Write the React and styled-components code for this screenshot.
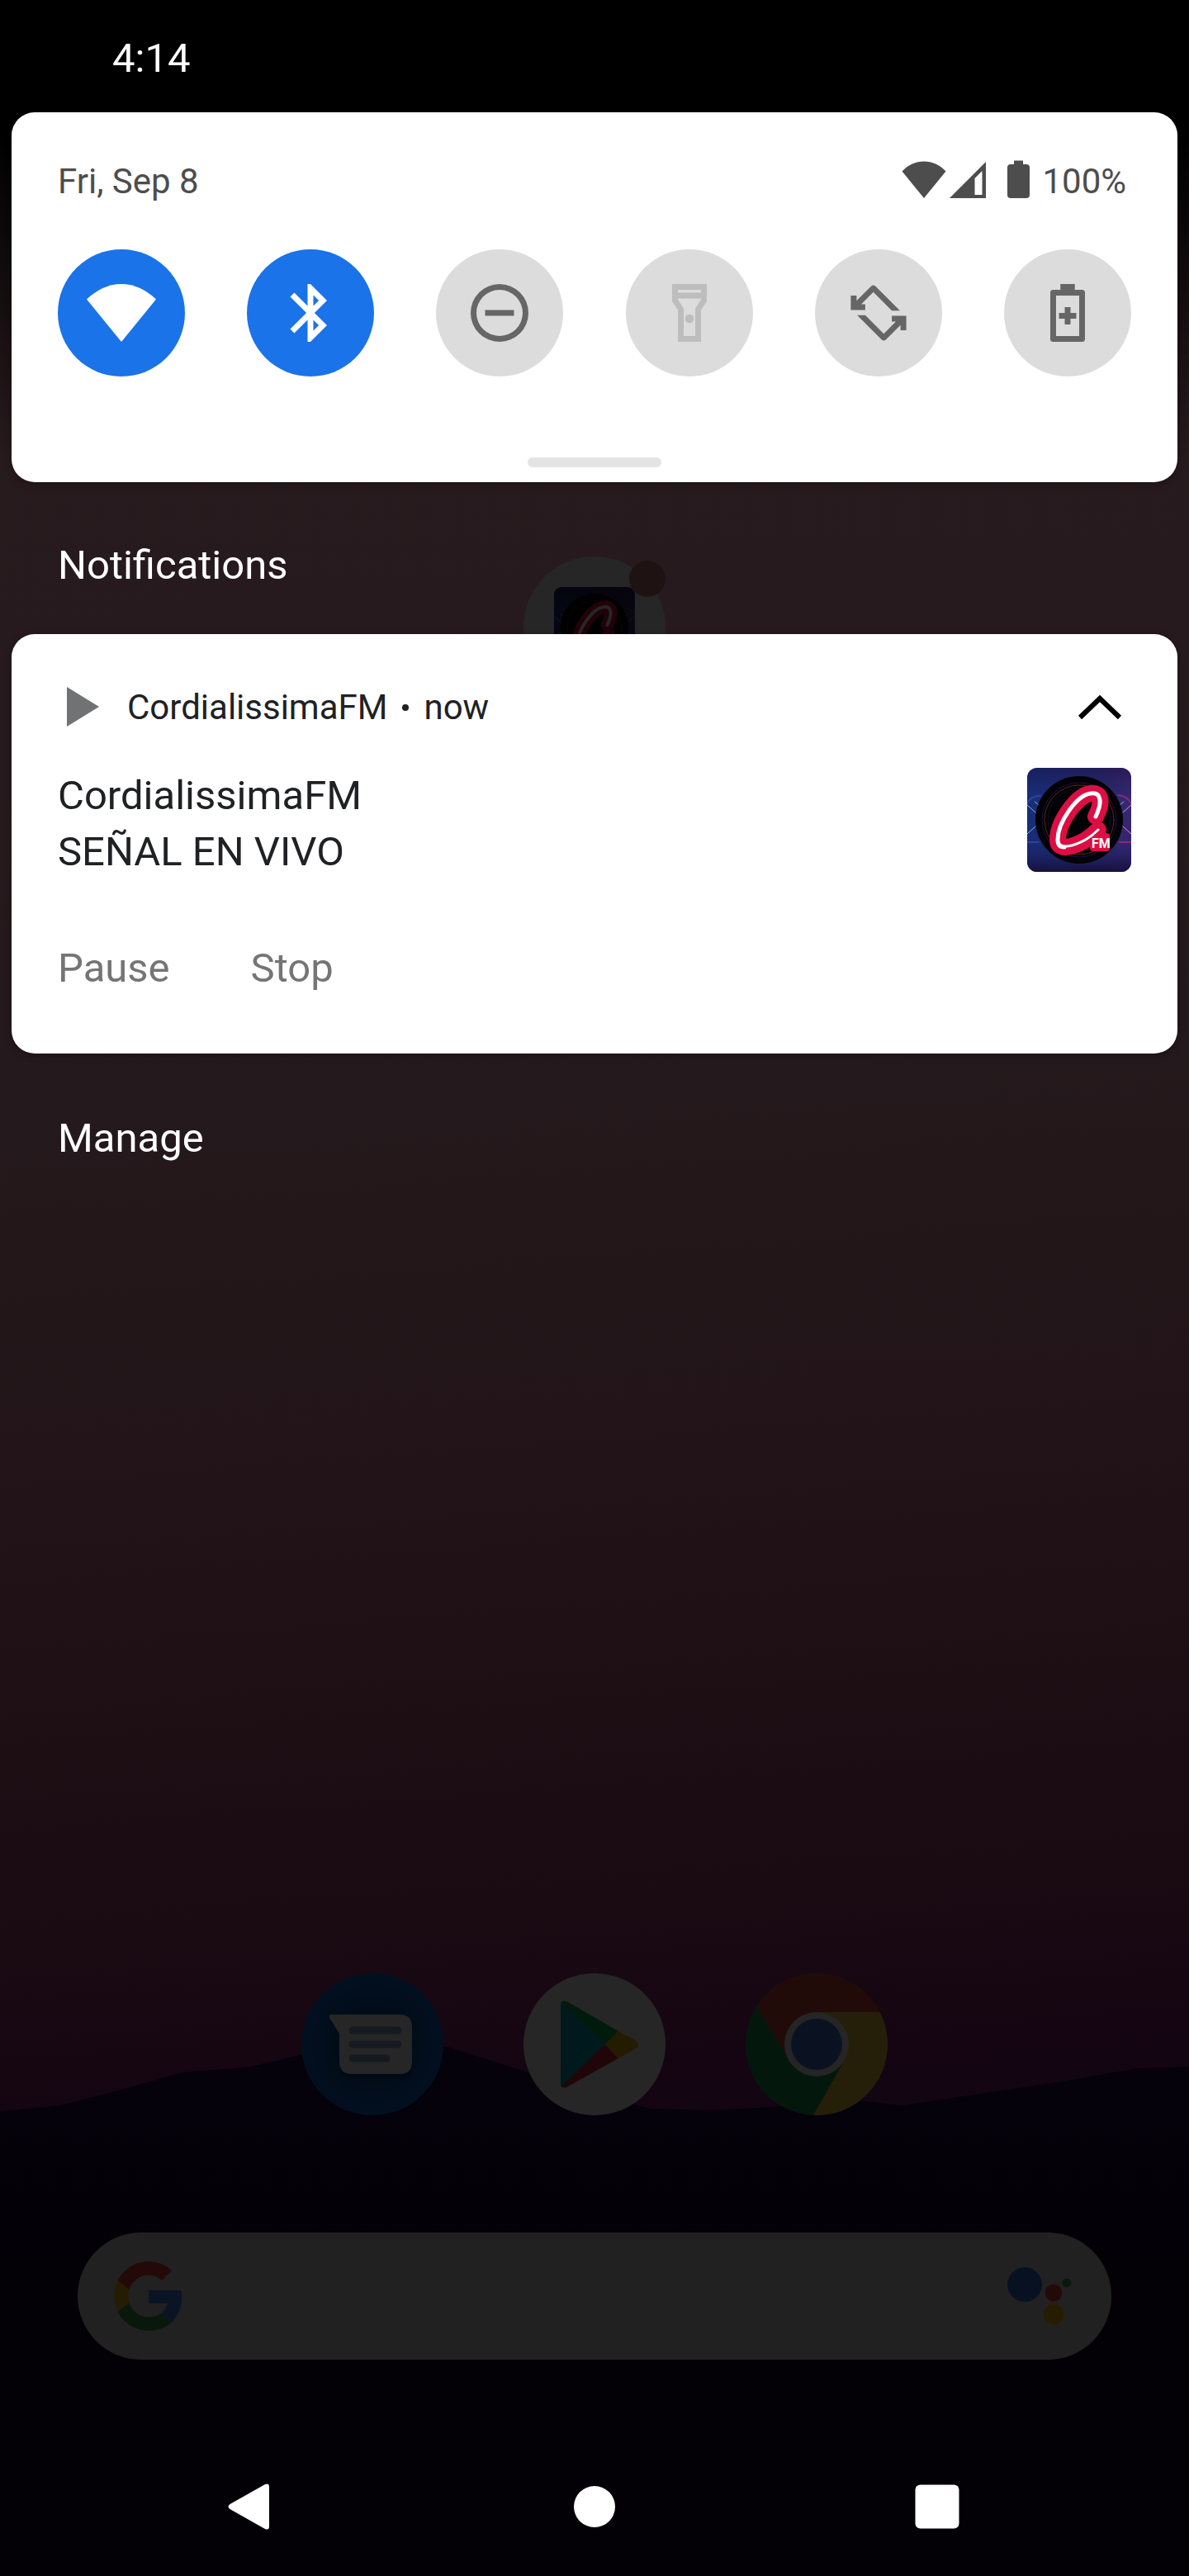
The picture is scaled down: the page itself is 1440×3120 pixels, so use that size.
import React from "react";
import styled, { createGlobalStyle } from "styled-components";

const GlobalStyle = createGlobalStyle`
  *, *::before, *::after { box-sizing: border-box; }
  body { margin: 0; background: #000; font-family: Roboto, "Noto Sans", sans-serif; }
  button { font: inherit; color: inherit; background: none; border: 0; padding: 0; cursor: pointer; }
  svg { display: block; flex: none; }
  h1, h2, p { margin: 0; font-weight: 400; }
`;

const Screen = styled.main`
  position: relative;
  isolation: isolate;
  display: flex;
  flex-direction: column;
  min-height: 100vh;
  overflow: hidden;
  font-size: 49px;
  line-height: 58px;
  color: #fff;
`;

const Wallpaper = styled.svg`
  position: absolute;
  inset: 0;
  z-index: -2;
  width: 100%;
  height: 100%;
`;

const StatusBar = styled.header`
  height: 136px;
  padding: 42px 136px 0;
`;

const Card = styled.section`
  margin: 0 14px;
  padding: ${(p) => p.$pad};
  border-radius: 28px;
  background: #fff;
  color: #202124;
  box-shadow: 0 2px 10px rgba(0, 0, 0, 0.3);
`;

const SettingsHeader = styled.div`
  display: flex;
  align-items: center;
  height: 52px;
  padding-right: 6px;
  font-size: 42px;
  line-height: 52px;
  color: #4d4d4d;
`;

const StatusIcons = styled.div`
  display: flex;
  align-items: center;
  margin-left: auto;
`;

const BatteryLevel = styled.span`
  margin-left: 14px;
`;

const Tiles = styled.div`
  display: flex;
  justify-content: space-between;
  margin-top: 56px;
`;

const Tile = styled.button`
  display: grid;
  place-items: center;
  width: 154px;
  height: 154px;
  border-radius: 50%;
  background: ${(p) => (p.$on ? "#1a73e8" : "#dcdcdc")};
  color: ${(p) => (p.$on ? "#fff" : p.disabled ? "#bdbdbd" : "#666")};
`;

const Handle = styled.div`
  width: 162px;
  height: 12px;
  margin: 98px auto 0;
  border-radius: 6px;
  background: #e4e4e4;
`;

const SectionHeading = styled.div`
  position: relative;
  padding: 72px 70px 54px;
`;

const SectionTitle = styled.h2`
  font-size: 49px;
`;

const HomeApp = styled.div`
  position: absolute;
  z-index: -1;
  top: 90px;
  left: 50%;
  display: grid;
  place-items: center;
  width: 172px;
  height: 172px;
  margin-left: -86px;
  border-radius: 50%;
  background: #fff;
  filter: brightness(0.15);
`;

const Badge = styled.span`
  position: absolute;
  top: 5px;
  right: 0;
  width: 44px;
  height: 44px;
  border-radius: 50%;
  background: #c87a80;
`;

const NotificationHeader = styled.div`
  display: flex;
  align-items: center;
  height: 58px;
  font-size: 42px;
`;

const AppName = styled.span`
  margin-left: 28px;
`;

const Dot = styled.span`
  width: 8px;
  height: 8px;
  margin: 0 18px;
  border-radius: 50%;
  background: #202124;
`;

const Collapse = styled.button`
  margin: 0 8px 0 auto;
`;

const NotificationBody = styled.div`
  display: flex;
  justify-content: space-between;
  margin-top: 44px;
  line-height: 68px;
`;

const Actions = styled.div`
  display: flex;
  gap: 98px;
  margin-top: 78px;
  color: #757575;
`;

const ManageRow = styled.div`
  padding: 74px 70px;
`;

const Dock = styled.nav`
  display: flex;
  justify-content: center;
  gap: 97px;
  margin-top: auto;
`;

const DockApp = styled.a`
  display: block;
  border-radius: 50%;
  filter: brightness(0.15);
`;

const SearchBar = styled.form`
  display: flex;
  align-items: center;
  height: 154px;
  margin: 142px 94px 94px;
  padding: 0 44px;
  border-radius: 77px;
  background: #dedede;
  filter: brightness(0.15);
`;

const SearchInput = styled.input`
  flex: 1;
  min-width: 0;
  height: 100%;
  border: 0;
  outline: 0;
  background: transparent;
  font: inherit;
`;

const NavBar = styled.nav`
  display: flex;
  justify-content: center;
  gap: 275px;
  height: 168px;
`;

const NavButton = styled.button`
  display: grid;
  place-items: center;
  width: 140px;
`;

const tiles = [
  { label: "Wi-Fi", on: true, art: <path d="M12 22 24 7.3C20.7 4.1 16.5 2 12 2S3.3 4.1 0 7.3Z" /> },
  {
    label: "Bluetooth",
    on: true,
    art: (
      <path d="M17.71 7.71 12 2h-1v7.59L6.41 5 5 6.41 10.59 12 5 17.59 6.41 19 11 14.41V22h1l5.71-5.71L13.41 12zM13 5.83l1.88 1.88L13 9.59zm1.88 10.46L13 18.17v-3.76z" />
    ),
  },
  {
    label: "Do not disturb",
    art: <path d="M7 11v2h10v-2zM12 2a10 10 0 1 0 0 20 10 10 0 0 0 0-20zm0 18a8 8 0 1 1 0-16 8 8 0 0 1 0 16z" />,
  },
  {
    label: "Flashlight",
    disabled: true,
    art: (
      <>
        <path d="M6 2v6l2 3v11h8V11l2-3V2zm10 2v1H8V4zm-2 6.4V20h-4v-9.6l-2-3V7h8v.4z" />
        <circle cx="12" cy="14" r="1.5" />
      </>
    ),
  },
  {
    label: "Auto-rotate",
    art: (
      <>
        <path d="M2.4 6h2v1.8l5.1-5.1q.7-.6 1.4 0l8.5 8.5h-2.8l-6.4-6.4L6 9h1.4v2h-5z" />
        <path transform="rotate(180 12 12)" d="M2.4 6h2v1.8l5.1-5.1q.7-.6 1.4 0l8.5 8.5h-2.8l-6.4-6.4L6 9h1.4v2h-5z" />
      </>
    ),
  },
  {
    label: "Battery Saver",
    art: (
      <>
        <path fillRule="evenodd" d="M9.5 2h5v2H17a1 1 0 0 1 1 1v16a1 1 0 0 1-1 1H7a1 1 0 0 1-1-1V5a1 1 0 0 1 1-1h2.5zM8 6v14h8V6z" />
        <path d="M11 10h2v2h2v2h-2v2h-2v-2H9v-2h2z" />
      </>
    ),
  },
];

function CoverArt({ size, id }) {
  return (
    <svg width={size} height={size} viewBox="0 0 126 126" aria-hidden="true">
      <defs>
        <linearGradient id={`${id}-sky`} x2="1" y2="0.2">
          <stop offset="0" stopColor="#16276b" />
          <stop offset="0.6" stopColor="#23205f" />
          <stop offset="1" stopColor="#451c5c" />
        </linearGradient>
        <linearGradient id={`${id}-shade`} x2="0" y2="1">
          <stop offset="0" stopColor="#1a1750" stopOpacity="0.5" />
          <stop offset="0.3" stopColor="#1c3b90" stopOpacity="0.4" />
          <stop offset="0.7" stopColor="#1b3588" stopOpacity="0.4" />
          <stop offset="1" stopColor="#170f3c" />
        </linearGradient>
        <clipPath id={`${id}-clip`}>
          <rect width="126" height="126" rx="12" />
        </clipPath>
      </defs>
      <g clipPath={`url(#${id}-clip)`} fill="none" strokeLinecap="round">
        <rect width="126" height="126" fill={`url(#${id}-sky)`} />
        <rect width="126" height="126" fill={`url(#${id}-shade)`} />
        <path d="M0 45 10 54M0 80 10 71M9 41l5 4" stroke="#72bce8" />
        <path d="M0 43Q4 34 16 34M0 90h14" stroke="#3c55b8" strokeWidth="2" opacity="0.6" />
        <path d="M126 45 116 54M126 80 116 71M117 41l-5 4" stroke="#e08ad8" />
        <path d="M126 43Q121 34 110 33M126 90h-14" stroke="#a5307c" strokeWidth="2" opacity="0.7" />
        <circle cx="63" cy="63" r="53" fill="#020105" />
        <circle cx="63" cy="63" r="45" stroke="#26145c" strokeWidth="0.8" />
        <circle cx="63" cy="63" r="42" stroke="#70380a" strokeWidth="0.8" />
        <circle cx="63" cy="63" r="38" stroke="#17103a" strokeWidth="0.8" />
        <path
          d="M83 59C92 42 90 29 77 31C60 33 37 66 37 87C37 105 68 93 86 75"
          stroke="#dd0e43"
          strokeWidth="20"
          strokeLinejoin="round"
        />
        <rect x="76" y="79" width="24" height="22" rx="4" fill="#dd0e43" />
        <path d="M84 58C92 42 90 29 77 31C60 33 37 66 37 87C37 103 68 93 86 75" stroke="#fff" strokeWidth="3" />
        <path d="M83 59C91 42 90 29 77 31C60 33 37 66 37 87Q37 96 45 96" stroke="#fff" strokeWidth="5" />
        <text x="78" y="97" fill="#fff" fontFamily="'Liberation Sans Narrow', Roboto, sans-serif" fontWeight="700" fontSize="16">
          FM
        </text>
      </g>
    </svg>
  );
}

function MessagesIcon() {
  return (
    <svg width="172" height="172" viewBox="0 0 172 172" role="img" aria-label="Messages">
      <defs>
        <radialGradient id="msg">
          <stop offset="0.5" stopColor="#0a50a0" />
          <stop offset="1" stopColor="#0f68d6" />
        </radialGradient>
      </defs>
      <circle cx="86" cy="86" r="86" fill="url(#msg)" />
      <path d="M38 55H120q14 0 14 14v46q0 14-14 14H60q-14 0-14-14V76L34 56z" fill="#063a78" opacity="0.5" />
      <path d="M36 50H119q15 0 15 15v42q0 15-15 15H61q-15 0-15-15V73L34 54q-1-4 2-4z" fill="#fff" />
      <path d="M62 69h55M62 86h55M62 103h41" stroke="#8db0dc" strokeWidth="9" strokeLinecap="round" />
    </svg>
  );
}

function PlayStoreIcon() {
  return (
    <svg width="172" height="172" viewBox="0 0 172 172" role="img" aria-label="Play Store">
      <circle cx="86" cy="86" r="86" fill="#fff" />
      <path d="M45 38v97q0 3 3 3L99 86 48 34q-3 0-3 4z" fill="#00a5c4" />
      <path d="M46 35q3-3 8 0l61 35-16 16z" fill="#00b04a" />
      <path d="M46 137q3 3 8 0l61-34-16-17z" fill="#d6283a" />
      <path d="m115 70 22 12q5 5 0 9l-22 12-16-17z" fill="#f0b800" />
    </svg>
  );
}

function ChromeIcon() {
  return (
    <svg width="172" height="172" viewBox="0 0 172 172" role="img" aria-label="Chrome">
      <defs>
        <clipPath id="chrome-disc">
          <circle cx="86" cy="86" r="86" />
        </clipPath>
      </defs>
      <g clipPath="url(#chrome-disc)">
        <rect width="172" height="172" fill="#1a9b52" />
        <path d="M86 47H172V172H82L120 105z" fill="#f7cf42" />
        <path d="M14 41 0 0H172V47H86L48 98z" fill="#df4b34" />
      </g>
      <circle cx="86" cy="86" r="39" fill="#f4f4f4" />
      <circle cx="86" cy="86" r="31" fill="#4478e2" />
    </svg>
  );
}

export default function App() {
  return (
    <Screen>
      <GlobalStyle />
      <Wallpaper viewBox="0 0 1440 3120" preserveAspectRatio="none" aria-hidden="true">
        <defs>
          <linearGradient id="sky" gradientUnits="userSpaceOnUse" x1="600" y1="0" x2="840" y2="3120">
            <stop offset="0" stopColor="#281b1e" />
            <stop offset="0.25" stopColor="#271a1e" />
            <stop offset="0.42" stopColor="#24191c" />
            <stop offset="0.55" stopColor="#221418" />
            <stop offset="0.65" stopColor="#1d0f14" />
            <stop offset="0.74" stopColor="#1a0a12" />
            <stop offset="0.8" stopColor="#150512" />
            <stop offset="0.84" stopColor="#120413" />
          </linearGradient>
          <linearGradient id="scrim" x2="0" y2="1">
            <stop offset="0" stopColor="#000" />
            <stop offset="0.28" stopColor="#000" />
            <stop offset="1" stopColor="#000" stopOpacity="0" />
          </linearGradient>
          <linearGradient id="hills" x2="0" y2="1">
            <stop offset="0" stopColor="#05020c" />
            <stop offset="0.4" stopColor="#030106" />
            <stop offset="1" stopColor="#040106" />
          </linearGradient>
        </defs>
        <rect width="1440" height="3120" fill="url(#sky)" />
        <path
          d="M0 2557 73 2550 150 2530 220 2510 303 2503 349 2492 440 2474 542 2479 634 2508 716 2537 790 2554 863 2556 964 2550 1040 2544 1093 2550 1139 2543 1286 2521 1377 2505 1440 2503V3120H0Z"
          fill="url(#hills)"
        />
        <rect width="1440" height="560" fill="url(#scrim)" />
      </Wallpaper>

      <StatusBar>
        <time>4:14</time>
      </StatusBar>

      <Card $pad="58px 56px 18px" aria-label="Quick settings">
        <SettingsHeader>
          <span>Fri, Sep 8</span>
          <StatusIcons>
            <svg width="156" height="52" viewBox="0 0 156 52" fill="#4d4d4d" aria-hidden="true">
              <path d="M27 46 53.500 13.500C46 5.500 37 1.500 27 1.500S8 5.500.5 13.500Z" />
              <path fillRule="evenodd" d="M58 46 102 2V46ZM88.500 42H97.500V13L88.500 22Z" />
              <path d="M136 .5h11V5h4q4 0 4 4v33q0 4-4 4h-19q-4 0-4-4V9q0-4 4-4h4z" />
            </svg>
            <BatteryLevel>100%</BatteryLevel>
          </StatusIcons>
        </SettingsHeader>
        <Tiles>
          {tiles.map((t) => (
            <Tile key={t.label} $on={t.on} disabled={t.disabled} aria-label={t.label} aria-pressed={!!t.on}>
              <svg width="84" height="84" viewBox="0 0 24 24" fill="currentColor" aria-hidden="true">
                {t.art}
              </svg>
            </Tile>
          ))}
        </Tiles>
        <Handle />
      </Card>

      <SectionHeading>
        <HomeApp>
          <CoverArt size={98} id="home" />
          <Badge />
        </HomeApp>
        <SectionTitle>Notifications</SectionTitle>
      </SectionHeading>

      <Card as="article" $pad="60px 56px 74px">
        <NotificationHeader>
          <svg width="56" height="56" viewBox="0 0 56 56" aria-hidden="true">
            <path d="M11 3 50 27 11 51Z" fill="#707274" />
          </svg>
          <AppName>CordialissimaFM</AppName>
          <Dot />
          <time>now</time>
          <Collapse aria-label="Collapse">
            <svg width="60" height="56" viewBox="0 0 60 56" aria-hidden="true">
              <path d="M6 40 30 17 54 40" fill="none" stroke="#000" strokeWidth="6" />
            </svg>
          </Collapse>
        </NotificationHeader>
        <NotificationBody>
          <div>
            <p>CordialissimaFM</p>
            <p>SEÑAL EN VIVO</p>
          </div>
          <CoverArt size={126} id="cover" />
        </NotificationBody>
        <Actions>
          <button type="button">Pause</button>
          <button type="button">Stop</button>
        </Actions>
      </Card>

      <ManageRow>
        <button type="button">Manage</button>
      </ManageRow>

      <Dock aria-label="Favorites">
        <DockApp href="#messages">
          <MessagesIcon />
        </DockApp>
        <DockApp href="#play">
          <PlayStoreIcon />
        </DockApp>
        <DockApp href="#chrome">
          <ChromeIcon />
        </DockApp>
      </Dock>

      <SearchBar role="search">
        <svg width="84" height="84" viewBox="0 0 48 48" aria-hidden="true">
          <path fill="#EA4335" d="M24 9.500c3.540 0 6.710 1.220 9.210 3.600l6.850-6.850C35.900 2.380 30.470 0 24 0 14.620 0 6.510 5.380 2.560 13.220l7.980 6.190C12.430 13.720 17.740 9.500 24 9.500z" />
          <path fill="#4285F4" d="M46.980 24.550c0-1.570-.15-3.090-.38-4.550H24v9.020h12.940c-.58 2.960-2.260 5.480-4.780 7.180l7.730 6c4.510-4.180 7.090-10.360 7.090-17.650z" />
          <path fill="#FBBC05" d="M10.530 28.590c-.48-1.450-.76-2.990-.76-4.590s.27-3.140.76-4.590l-7.980-6.190C.92 16.460 0 20.120 0 24s.92 7.540 2.560 10.780z" />
          <path fill="#34A853" d="M24 48c6.480 0 11.930-2.130 15.890-5.810l-7.730-6c-2.150 1.450-4.920 2.300-8.160 2.300-6.260 0-11.570-4.220-13.470-9.910l-7.980 6.190C6.510 42.620 14.620 48 24 48z" />
        </svg>
        <SearchInput type="search" aria-label="Search" />
        <button type="button" aria-label="Assistant">
          <svg width="84" height="84" viewBox="0 0 84 84" aria-hidden="true">
            <circle cx="23" cy="28" r="21" fill="#3574dc" />
            <circle cx="58" cy="38" r="10.500" fill="#ea4335" />
            <circle cx="74" cy="26" r="5.500" fill="#34a853" />
            <circle cx="58" cy="64" r="12.500" fill="#fbbc05" />
          </svg>
        </button>
      </SearchBar>

      <NavBar aria-label="System">
        <NavButton aria-label="Back">
          <svg width="60" height="60" viewBox="0 0 60 60" fill="#fff" aria-hidden="true">
            <path d="M3.500 27 46 3q5-2 5 3v48q0 5-5 3L3.500 33q-4-3 0-6z" />
          </svg>
        </NavButton>
        <NavButton aria-label="Home">
          <svg width="60" height="60" viewBox="0 0 60 60" fill="#fff" aria-hidden="true">
            <circle cx="30" cy="30" r="25" />
          </svg>
        </NavButton>
        <NavButton aria-label="Overview">
          <svg width="60" height="60" viewBox="0 0 60 60" fill="#fff" aria-hidden="true">
            <rect x="3.500" y="3.500" width="53" height="53" rx="6" />
          </svg>
        </NavButton>
      </NavBar>
    </Screen>
  );
}
